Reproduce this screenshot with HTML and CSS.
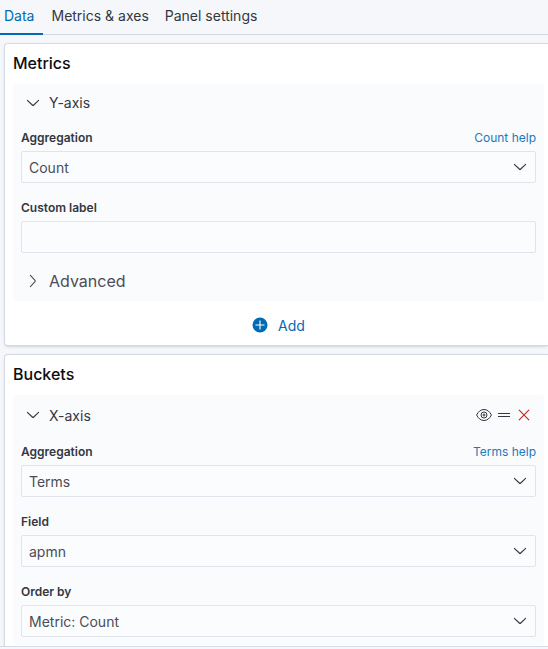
FILE: index.html
```html
<!DOCTYPE html>
<html lang="en">
<head>
  <meta charset="utf-8">
  <meta name="viewport" content="width=device-width, initial-scale=1">
  <title>Visualization editor</title>
  <link rel="stylesheet" href="styles.css">
</head>
<body>
  <svg class="symbols">
    <symbol id="arrow-down" viewBox="0 0 16 16">
      <path d="M2.4 5.4 7.3 10a1 1 0 0 0 1.4 0l4.9-4.6" fill="none" stroke="currentColor" stroke-width="1.1" stroke-linecap="round"/>
    </symbol>
    <symbol id="arrow-right" viewBox="0 0 16 16">
      <path d="M5.4 2.4 10 7.3a1 1 0 0 1 0 1.4l-4.6 4.9" fill="none" stroke="currentColor" stroke-width="1.1" stroke-linecap="round"/>
    </symbol>
  </svg>
  <div class="editor">
    <nav class="tabs">
      <button class="tab tab-active" type="button">Data</button>
      <button class="tab" type="button">Metrics &amp; axes</button>
      <button class="tab" type="button">Panel settings</button>
    </nav>
    <main class="content">
      <section class="panel">
        <h2 class="panel-title">Metrics</h2>
        <div class="group">
          <div class="group-header">
            <button class="toggle" type="button"><svg class="icon"><use href="#arrow-down"/></svg>Y-axis</button>
          </div>
          <div class="field">
            <div class="label-row">
              <label class="label" for="metric-agg">Aggregation</label>
              <a class="help" href="#">Count help</a>
            </div>
            <div class="select-wrap">
              <select class="control" id="metric-agg"><option>Count</option></select>
              <svg class="icon select-arrow"><use href="#arrow-down"/></svg>
            </div>
          </div>
          <div class="field">
            <div class="label-row"><label class="label" for="custom-label">Custom label</label></div>
            <input class="control" id="custom-label" type="text">
          </div>
          <button class="toggle toggle-advanced" type="button"><svg class="icon"><use href="#arrow-right"/></svg>Advanced</button>
        </div>
        <button class="add" type="button">
          <svg class="icon" viewBox="0 0 16 16">
            <circle cx="8" cy="8" r="7.5" fill="currentColor"/>
            <path d="M8 3.5v9M3.5 8h9" stroke="#fff" stroke-width="1.1"/>
          </svg>Add
        </button>
      </section>

      <section class="panel">
        <h2 class="panel-title">Buckets</h2>
        <div class="group">
          <div class="group-header">
            <button class="toggle" type="button"><svg class="icon"><use href="#arrow-down"/></svg>X-axis</button>
            <div class="actions">
              <button class="action" type="button" aria-label="Toggle aggregation">
                <svg class="icon" viewBox="0 0 16 16" fill="none" stroke="currentColor">
                  <path d="M.6 8C2.2 4.600 4.800 2.500 8 2.500S13.800 4.600 15.400 8c-1.600 3.400-4.200 5.500-7.400 5.500S2.200 11.400.6 8Z"/>
                  <circle cx="8" cy="8" r="3"/>
                  <circle cx="8" cy="8" r="1"/>
                </svg>
              </button>
              <button class="action" type="button" aria-label="Reorder">
                <svg class="icon" viewBox="0 0 16 16" fill="none" stroke="currentColor"><path d="M2 6.500h12M2 9.500h12"/></svg>
              </button>
              <button class="action action-remove" type="button" aria-label="Remove">
                <svg class="icon" viewBox="0 0 16 16" fill="none" stroke="currentColor" stroke-width="1.1" stroke-linecap="round"><path d="m3.200 3.200 9.600 9.600M12.800 3.200l-9.600 9.600"/></svg>
              </button>
            </div>
          </div>
          <div class="field">
            <div class="label-row">
              <label class="label" for="bucket-agg">Aggregation</label>
              <a class="help" href="#">Terms help</a>
            </div>
            <div class="select-wrap">
              <select class="control" id="bucket-agg"><option>Terms</option></select>
              <svg class="icon select-arrow"><use href="#arrow-down"/></svg>
            </div>
          </div>
          <div class="field">
            <div class="label-row"><label class="label" for="bucket-field">Field</label></div>
            <div class="select-wrap">
              <select class="control" id="bucket-field"><option>apmn</option></select>
              <svg class="icon select-arrow"><use href="#arrow-down"/></svg>
            </div>
          </div>
          <div class="field">
            <div class="label-row"><label class="label" for="order-by">Order by</label></div>
            <div class="select-wrap">
              <select class="control" id="order-by"><option>Metric: Count</option></select>
              <svg class="icon select-arrow"><use href="#arrow-down"/></svg>
            </div>
          </div>
        </div>
      </section>
    </main>
    <footer class="bottom-bar"></footer>
  </div>
</body>
</html>
```
FILE: styles.css
```css
* {
  box-sizing: border-box;
}

body {
  margin: 0;
  background: #f5f7fa;
  color: #343741;
  font-family: Inter, "Liberation Sans", sans-serif;
  font-size: 14px;
  line-height: 21px;
}

button {
  margin: 0;
  padding: 0;
  border: 0;
  background: none;
  color: inherit;
  font: inherit;
  cursor: pointer;
}

.symbols {
  display: none;
}

.editor {
  display: flex;
  flex-direction: column;
  height: 100vh;
}

.tabs {
  display: flex;
  flex: none;
  box-shadow: inset 0 -1px #d3dae6;
}

.tab {
  padding: 5px 8px 9px;
}

.tab-active {
  padding-right: 9px;
  padding-left: 4px;
  color: #006bb4;
  box-shadow: inset 0 -2px #006bb4;
}

.content {
  display: flex;
  flex: 1;
  flex-direction: column;
  gap: 8px;
  min-height: 0;
  padding: 8px 0 0 4px;
  overflow: hidden;
}

.panel {
  flex: none;
  padding: 8px 4px 4px 8px;
  border: 1px solid #d3dae6;
  border-right: 0;
  border-radius: 4px 0 0 4px;
  background: #fff;
  box-shadow: 0 2px 2px -1px rgba(152, 162, 179, 0.3), 0 1px 5px -2px rgba(152, 162, 179, 0.3);
}

.panel-title {
  margin: 0 0 10px;
  color: #0c0d10;
  font-size: 16px;
  font-weight: 500;
  line-height: 22px;
}

.group {
  padding: 8px;
  border-radius: 4px;
  background: #fafbfd;
}

.group-header {
  display: flex;
  align-items: center;
  justify-content: space-between;
}

.toggle {
  display: flex;
  align-items: center;
  gap: 8px;
  padding-left: 4px;
}

.toggle-advanced {
  margin-top: 16px;
  color: #4a4d56;
  font-size: 16px;
  line-height: 24px;
}

.icon {
  display: block;
  flex: none;
  width: 16px;
  height: 16px;
}

.actions {
  display: flex;
  padding-right: 2px;
}

.action {
  display: flex;
  align-items: center;
  justify-content: center;
  width: 20px;
  height: 24px;
}

.action-remove {
  color: #bd271e;
}

.field {
  margin-top: 16px;
}

.label-row {
  display: flex;
  justify-content: space-between;
  margin-bottom: 4px;
  font-size: 12px;
  line-height: 18px;
}

.label {
  color: #343741;
  font-weight: 600;
}

.help {
  color: #1a7abb;
  text-decoration: none;
}

.select-wrap {
  display: grid;
  align-items: center;
}

.select-wrap > * {
  grid-area: 1 / 1;
}

.select-arrow {
  justify-self: end;
  margin-right: 8px;
  pointer-events: none;
}

.control {
  display: block;
  width: 100%;
  height: 32px;
  margin: 0;
  padding: 0 32px 0 7px;
  border: 1px solid #e0e4ed;
  border-radius: 2px;
  appearance: none;
  background: #fbfcfd;
  color: #4a4d56;
  font: inherit;
}

.add {
  display: flex;
  align-items: center;
  justify-content: center;
  gap: 10px;
  width: 100%;
  height: 32px;
  margin-top: 8px;
  color: #006bb4;
}

.bottom-bar {
  flex: none;
  height: 3px;
  border-top: 1px solid #d3dae6;
}
```
